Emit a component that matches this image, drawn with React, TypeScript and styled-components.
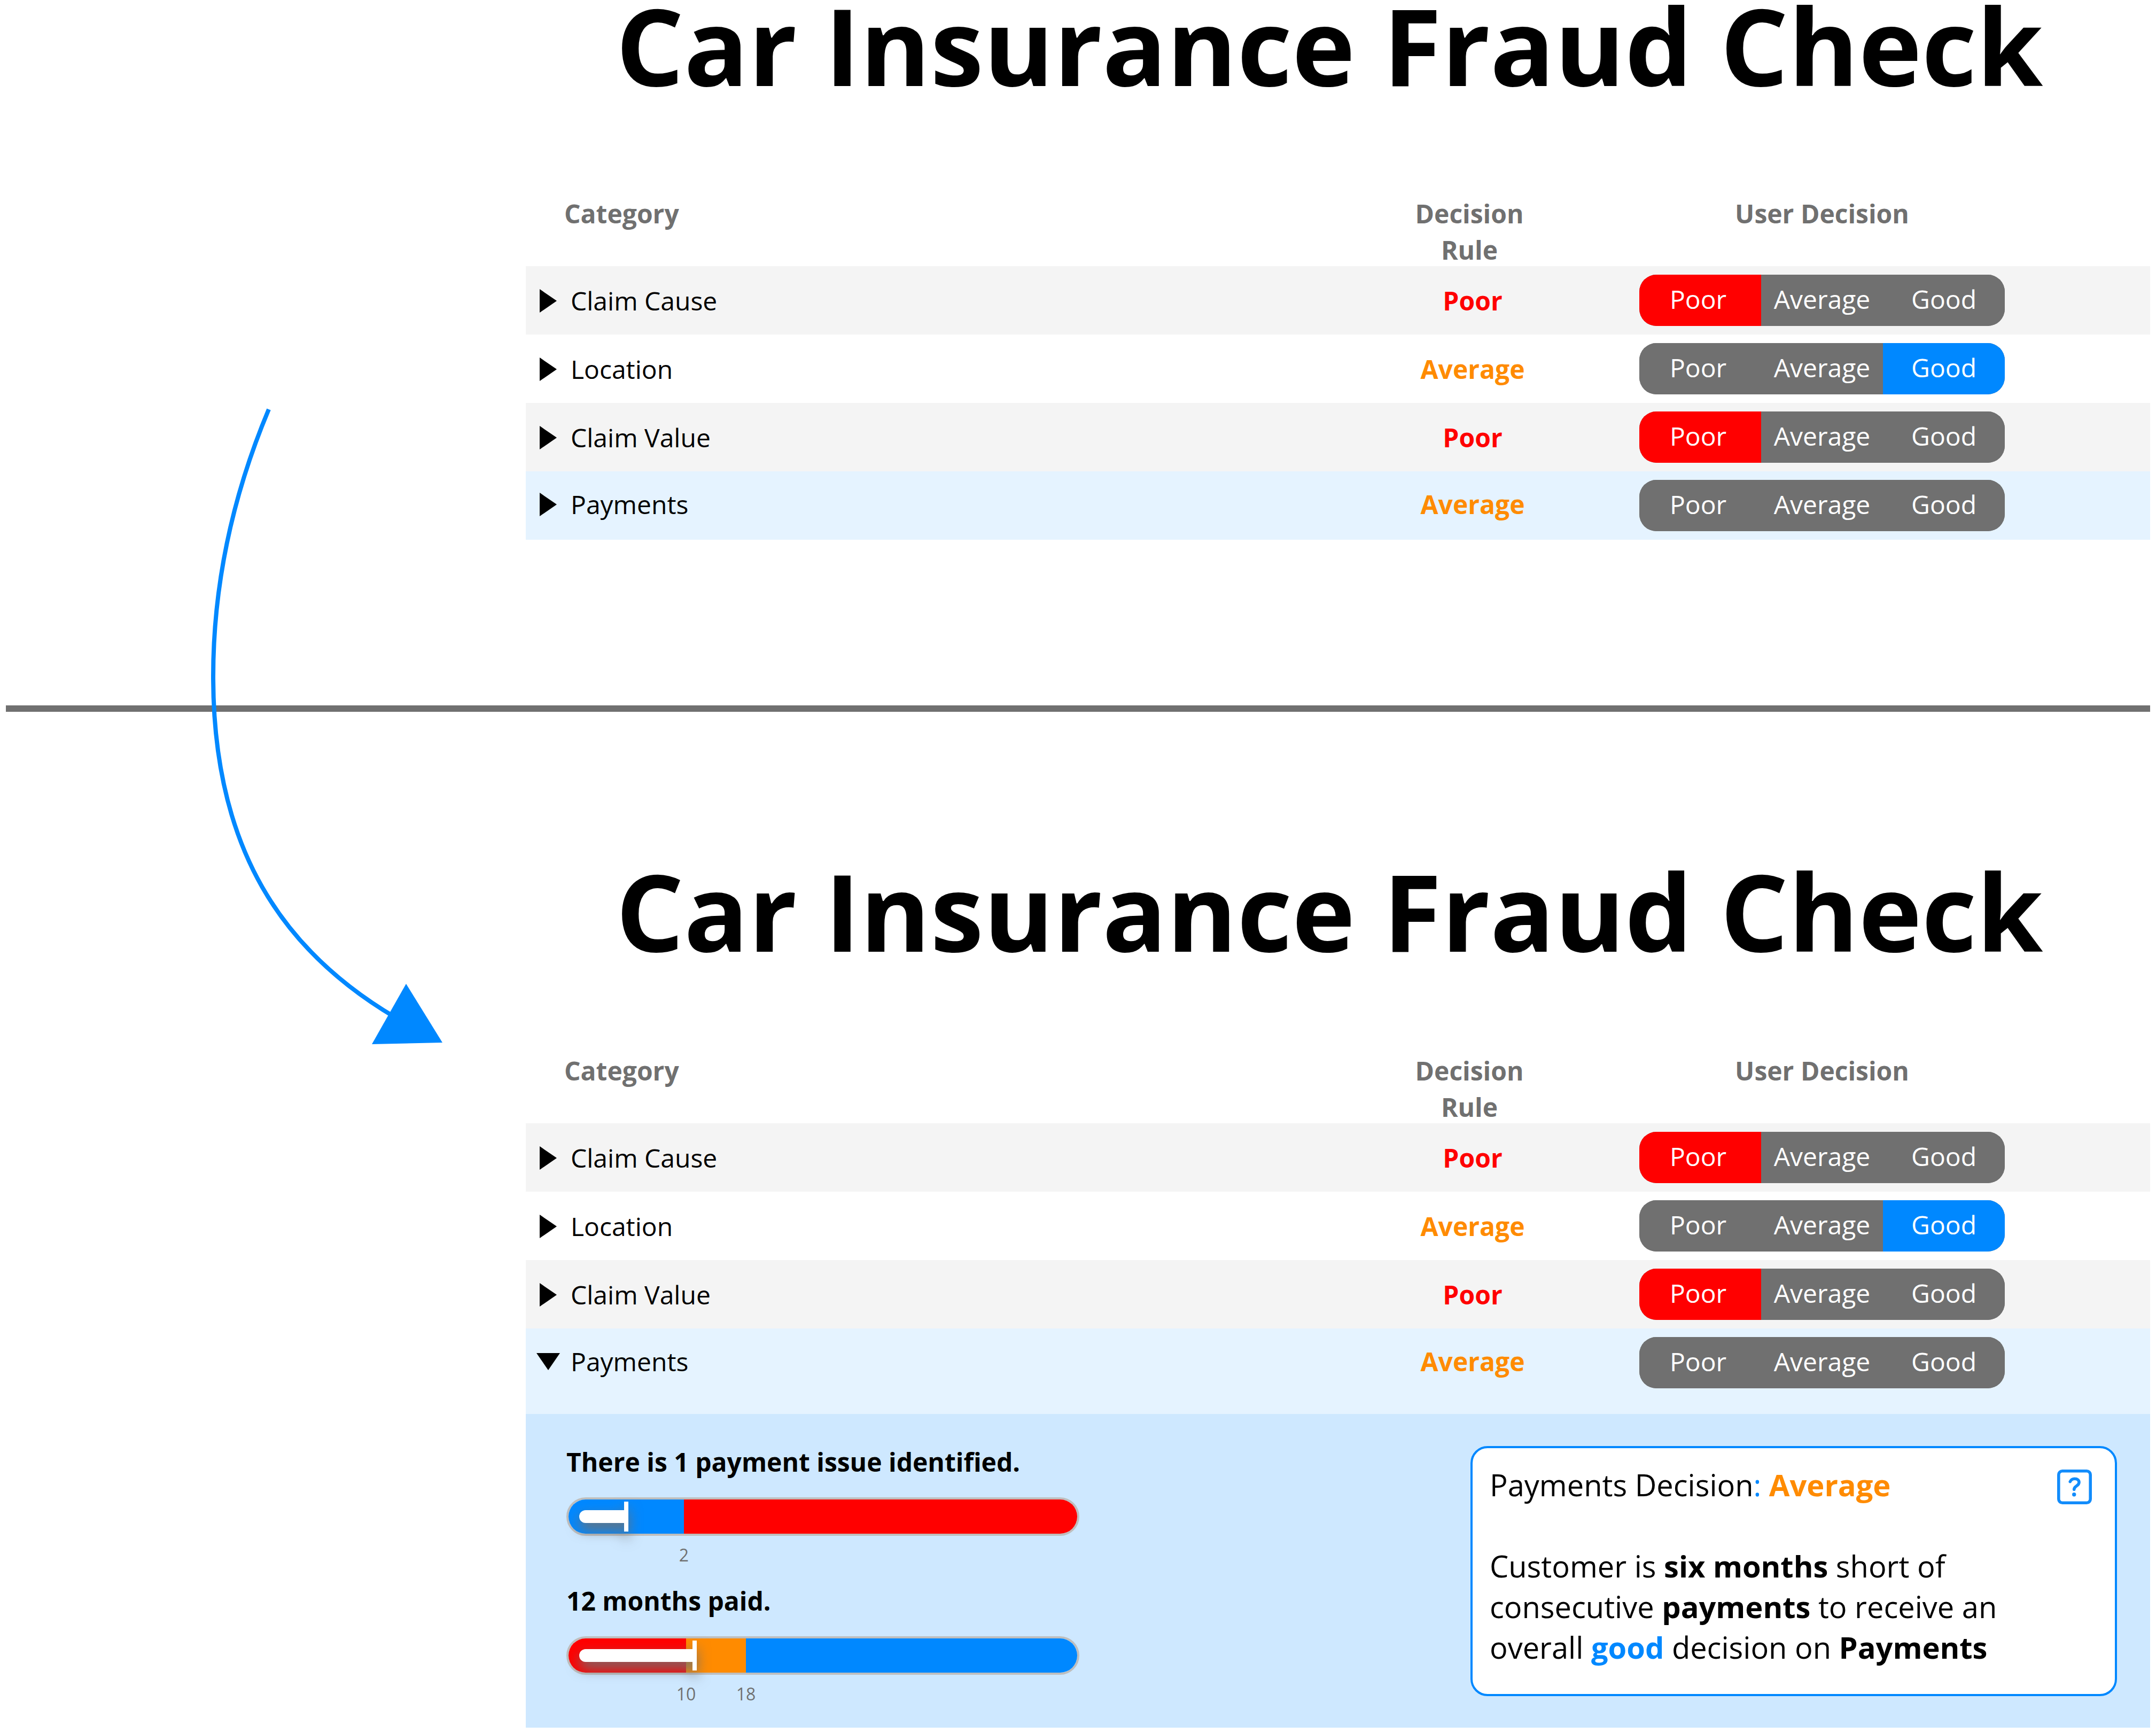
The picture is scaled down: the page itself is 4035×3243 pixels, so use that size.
import React, { useState } from "react";
import styled, { createGlobalStyle } from "styled-components";

const GREY = "#707070";
const RED = "#ff0000";
const ORANGE = "#ff8b00";
const BLUE = "#0088ff";

type Rating = "Poor" | "Average" | "Good";

const RATINGS: Rating[] = ["Poor", "Average", "Good"];
const RATING_COLOR: Record<Rating, string> = {
  Poor: RED,
  Average: ORANGE,
  Good: BLUE,
};

const GlobalStyle = createGlobalStyle`
  *, *::before, *::after { box-sizing: border-box; }
  body {
    margin: 0;
    background: #fff;
    color: #000;
    font-family: "Open Sans", "Noto Sans", sans-serif;
    font-size: 48px;
  }
  button { font: inherit; color: inherit; border: 0; padding: 0; background: none; cursor: pointer; }
`;

const Page = styled.main`
  position: relative;
  padding: 0 11px 10px;
`;

const Panel = styled.section<{ $top: number; $bottom: number }>`
  padding: ${(p) => p.$top}px 0 ${(p) => p.$bottom}px 973px;
`;

const Title = styled.h1<{ $gap: number }>`
  margin: 0 0 ${(p) => p.$gap}px;
  padding-right: 32px;
  font-size: 200px;
  font-weight: 700;
  line-height: 168px;
  text-align: center;
  white-space: nowrap;
`;

const Divider = styled.hr`
  height: 12px;
  margin: 0;
  border: 0;
  background: ${GREY};
`;

const Flow = styled.svg`
  position: absolute;
  left: 380px;
  top: 750px;
  width: 460px;
  height: 1210px;
  pointer-events: none;
`;

const Table = styled.table`
  width: 100%;
  table-layout: fixed;
  border-collapse: collapse;

  th,
  td {
    padding: 0;
    vertical-align: top;
  }
`;

const RuleCol = styled.col`
  width: 240px;
`;

const DecisionCol = styled.col`
  width: 1152px;
`;

const HeadLabel = styled.div`
  height: 132px;
  color: ${GREY};
  font-weight: 700;
  line-height: 68px;
  text-align: center;
`;

const CategoryHead = styled(HeadLabel)`
  padding-left: 72px;
  text-align: left;
`;

const RuleHead = styled(HeadLabel)`
  padding-right: 4px;
`;

const DecisionHead = styled(HeadLabel)`
  width: 684px;
  margin-left: 196px;
`;

const Row = styled.tr<{ $tone: string; $tall: boolean }>`
  height: ${(p) => (p.$tall ? 160 : 128)}px;
  background: ${(p) => p.$tone};
`;

const Toggle = styled.button<{ $drop: number }>`
  display: flex;
  align-items: center;
  gap: 20px;
  margin-top: ${(p) => p.$drop}px;
  padding-left: 20px;
  line-height: 124px;
`;

const Caret = styled.svg<{ $open: boolean }>`
  width: 44px;
  height: 44px;
  transform: rotate(${(p) => (p.$open ? 90 : 0)}deg);
`;

const Rule = styled.div<{ $drop: number; $color: string }>`
  padding: ${(p) => p.$drop}px 0 0 8px;
  color: ${(p) => p.$color};
  font-weight: 700;
  line-height: 124px;
  text-align: center;
`;

const Segments = styled.div`
  display: grid;
  grid-template-columns: repeat(3, 1fr);
  width: 684px;
  height: 96px;
  margin: 16px 0 0 196px;
  border-radius: 32px;
  background: ${GREY};
  overflow: hidden;
`;

const Segment = styled.button<{ $fill: string }>`
  padding-bottom: 5px;
  background: ${(p) => p.$fill};
  color: #fff;

  &:first-child {
    padding-right: 8px;
  }
`;

const Detail = styled.div`
  display: flex;
  justify-content: space-between;
  align-items: flex-start;
  padding: 60px 62px 39px 76px;
  background: #cee8ff;
`;

const Gauges = styled.div`
  display: flex;
  flex-direction: column;
  gap: 32px;
  width: 960px;
`;

const GaugeTitle = styled.h2`
  margin: 0 0 36px;
  font-size: 48px;
  font-weight: 700;
  line-height: 60px;
`;

const Track = styled.div`
  position: relative;
  display: flex;
  height: 72px;
  border: 4px solid #bebebe;
  border-radius: 36px;
`;

const Band = styled.div<{ $color: string }>`
  background: ${(p) => p.$color};

  &:first-child {
    border-radius: 32px 0 0 32px;
  }
  &:last-of-type {
    flex: 1;
    border-radius: 0 32px 32px 0;
  }
`;

const Pointer = styled.span`
  position: absolute;
  left: 20px;
  top: 4px;
  display: flex;
  align-items: center;
  height: 56px;
  filter: drop-shadow(0 12px 12px ${GREY});

  &::before {
    content: "";
    flex: 1;
    height: 24px;
    border-radius: 12px 0 0 12px;
    background: #fff;
  }
  &::after {
    content: "";
    width: 8px;
    height: 56px;
    background: #fff;
  }
`;

const Scale = styled.div`
  display: flex;
  height: 60px;
  padding: 14px 0 0 4px;
  color: ${GREY};
  font-size: 32px;
  line-height: 44px;
`;

const Mark = styled.span`
  display: flex;
  justify-content: flex-end;

  span {
    width: 64px;
    margin-right: -32px;
    text-align: center;
  }
`;

const Card = styled.aside`
  width: 1210px;
  padding: 30px 32px 50px;
  border: 4px solid ${BLUE};
  border-radius: 32px;
  background: #fff;
  font-size: 56px;
  line-height: 76px;
`;

const CardHead = styled.div`
  display: flex;
  justify-content: space-between;
  margin-bottom: 76px;
`;

const CardText = styled.p`
  width: 1020px;
  margin: 0;
`;

const Tint = styled.span<{ $color: string; $bold?: boolean }>`
  color: ${(p) => p.$color};
  font-weight: ${(p) => (p.$bold ? 700 : 400)};
`;

const Help = styled.button`
  width: 66px;
  height: 66px;
  margin: 10px 10px 0 0;

  svg {
    display: block;
  }
`;

interface GaugeProps {
  title: string;
  bands: { color: string; width: number }[];
  marks: number[];
  value: number;
}

function Gauge({ title, bands, marks, value }: GaugeProps) {
  return (
    <div>
      <GaugeTitle>{title}</GaugeTitle>
      <Track>
        {bands.map((b) => (
          <Band key={b.color} $color={b.color} style={{ width: b.width }} />
        ))}
        <Pointer style={{ width: value }} />
      </Track>
      <Scale>
        {marks.map((m, i) => (
          <Mark key={m} style={{ width: bands[i].width }}>
            <span>{m}</span>
          </Mark>
        ))}
      </Scale>
    </div>
  );
}

function PaymentsDetail() {
  return (
    <Detail>
      <Gauges>
        <Gauge
          title="There is 1 payment issue identified."
          bands={[
            { color: BLUE, width: 216 },
            { color: RED, width: 736 },
          ]}
          marks={[2]}
          value={92}
        />
        <Gauge
          title="12 months paid."
          bands={[
            { color: RED, width: 220 },
            { color: ORANGE, width: 112 },
            { color: BLUE, width: 620 },
          ]}
          marks={[10, 18]}
          value={220}
        />
      </Gauges>
      <Card>
        <CardHead>
          <span>
            Payments Decision<Tint $color={BLUE}>:</Tint>{" "}
            <Tint $color={ORANGE} $bold>
              Average
            </Tint>
          </span>
          <Help aria-label="Help">
            <svg width="66" height="66" viewBox="0 0 66 66" fill="none" stroke="#128cfb">
              <rect x="2.8" y="2.8" width="59.400" height="59.400" rx="7" strokeWidth="5.600" />
              <path
                d="M24.300 22.700C26 19 29 17.300 32.700 17.300C38 17.300 41 20 41 24C41 31 31.700 30.500 31.700 37.200"
                strokeWidth="5.600"
                strokeLinecap="round"
              />
              <circle cx="31.700" cy="46.700" r="3.700" fill="#128cfb" stroke="none" />
            </svg>
          </Help>
        </CardHead>
        <CardText>
          Customer is <b>six months</b> short of consecutive <b>payments</b> to receive an overall{" "}
          <Tint $color={BLUE} $bold>
            good
          </Tint>{" "}
          decision on <b>Payments</b>
        </CardText>
      </Card>
    </Detail>
  );
}

interface Check {
  name: string;
  rule: Rating;
  choice: Rating | null;
  tone: string;
  highlighted?: boolean;
}

const CHECKS: Check[] = [
  { name: "Claim Cause", rule: "Poor", choice: "Poor", tone: "#f4f4f4" },
  { name: "Location", rule: "Average", choice: "Good", tone: "#ffffff" },
  { name: "Claim Value", rule: "Poor", choice: "Poor", tone: "#f4f4f4" },
  { name: "Payments", rule: "Average", choice: null, tone: "#e5f3ff", highlighted: true },
];

function CheckRow({ check, initiallyOpen }: { check: Check; initiallyOpen: boolean }) {
  const [open, setOpen] = useState(initiallyOpen);
  const [choice, setChoice] = useState<Rating | null>(check.choice);
  const drop = check.highlighted ? 0 : 3;
  const expanded = open && !!check.highlighted;

  return (
    <>
      <Row $tone={check.tone} $tall={expanded}>
        <td>
          <Toggle $drop={drop} aria-expanded={open} onClick={() => setOpen(!open)}>
            <Caret $open={open} viewBox="0 0 44 44">
              <path d="M6 0L38 22L6 44Z" />
            </Caret>
            {check.name}
          </Toggle>
        </td>
        <td>
          <Rule $drop={drop} $color={RATING_COLOR[check.rule]}>
            {check.rule}
          </Rule>
        </td>
        <td>
          <Segments role="group" aria-label={`${check.name} decision`}>
            {RATINGS.map((r) => (
              <Segment
                key={r}
                aria-pressed={choice === r}
                $fill={choice === r ? RATING_COLOR[r] : GREY}
                onClick={() => setChoice(r)}
              >
                {r}
              </Segment>
            ))}
          </Segments>
        </td>
      </Row>
      {expanded && (
        <tr>
          <td colSpan={3}>
            <PaymentsDetail />
          </td>
        </tr>
      )}
    </>
  );
}

function CheckTable({ openName }: { openName?: string }) {
  return (
    <Table>
      <colgroup>
        <col />
        <RuleCol />
        <DecisionCol />
      </colgroup>
      <thead>
        <tr>
          <th scope="col">
            <CategoryHead>Category</CategoryHead>
          </th>
          <th scope="col">
            <RuleHead>Decision Rule</RuleHead>
          </th>
          <th scope="col">
            <DecisionHead>User Decision</DecisionHead>
          </th>
        </tr>
      </thead>
      <tbody>
        {CHECKS.map((c) => (
          <CheckRow key={c.name} check={c} initiallyOpen={c.name === openName} />
        ))}
      </tbody>
    </Table>
  );
}

export default function App() {
  return (
    <>
      <GlobalStyle />
      <Page>
        <Panel $top={0} $bottom={310}>
          <Title $gap={198}>Car Insurance Fraud Check</Title>
          <CheckTable />
        </Panel>
        <Divider />
        <Panel $top={288} $bottom={0}>
          <Title $gap={182}>Car Insurance Fraud Check</Title>
          <CheckTable openName="Payments" />
        </Panel>
        <Flow viewBox="380 750 460 1210" aria-hidden="true">
          <path
            d="M503 766C430 940 399 1110 399 1266C399 1590 530 1780 740 1904"
            fill="none"
            stroke={BLUE}
            strokeWidth="8"
          />
          <path d="M760 1841L828 1951L696 1954Z" fill={BLUE} />
        </Flow>
      </Page>
    </>
  );
}
